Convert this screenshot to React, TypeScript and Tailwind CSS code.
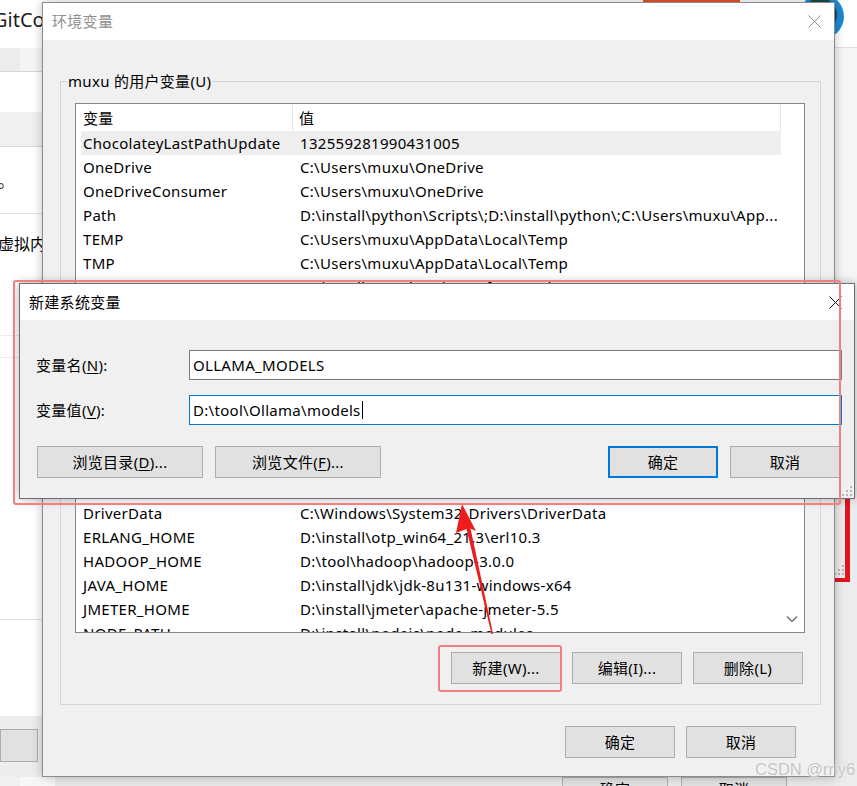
import React from "react";

type RowT = [string, string];

const userRows: RowT[] = [
  ["ChocolateyLastPathUpdate", "132559281990431005"],
  ["OneDrive", String.raw`C:\Users\muxu\OneDrive`],
  ["OneDriveConsumer", String.raw`C:\Users\muxu\OneDrive`],
  ["Path", String.raw`D:\install\python\Scripts\;D:\install\python\;C:\Users\muxu\App...`],
  ["TEMP", String.raw`C:\Users\muxu\AppData\Local\Temp`],
  ["TMP", String.raw`C:\Users\muxu\AppData\Local\Temp`],
  ["VSCODE_HOME", String.raw`D:\install\vscode\Microsoft VS Code`],
];

const sysRows: RowT[] = [
  ["ChocolateyInstall", String.raw`C:\ProgramData\chocolatey`],
  ["CLASSPATH", String.raw`.;%JAVA_HOME%\lib\dt.jar;%JAVA_HOME%\lib\tools.jar`],
  ["ComSpec", String.raw`C:\Windows\system32\cmd.exe`],
  ["DriverData", String.raw`C:\Windows\System32\Drivers\DriverData`],
  ["ERLANG_HOME", String.raw`D:\install\otp_win64_21.3\erl10.3`],
  ["HADOOP_HOME", String.raw`D:\tool\hadoop\hadoop-3.0.0`],
  ["JAVA_HOME", String.raw`D:\install\jdk\jdk-8u131-windows-x64`],
  ["JMETER_HOME", String.raw`D:\install\jmeter\apache-jmeter-5.5`],
  ["NODE_PATH", String.raw`D:\install\nodejs\node_modules`],
];

function Row({ r, sel }: { r: RowT; sel?: boolean }) {
  return (
    <div className={sel ? "flex h-[24px] shrink-0 items-center bg-[#eeeeee]" : "flex h-[24px] shrink-0 items-center"}>
      <div className="w-[219px] shrink-0 overflow-hidden whitespace-nowrap pl-[2px]">{r[0]}</div>
      <div className="min-w-0 flex-1 overflow-hidden whitespace-nowrap">{r[1]}</div>
    </div>
  );
}

function Chevron() {
  return (
    <svg width="12" height="8" viewBox="0 0 12 8" className="absolute bottom-[9px] right-[6px]">
      <polyline points="1,1.5 6,6.5 11,1.5" fill="none" stroke="#606060" strokeWidth="1.2" />
    </svg>
  );
}

function List({ rows, tall, selFirst }: { rows: RowT[]; tall?: boolean; selFirst?: boolean }) {
  return (
    <div className={tall ? "relative h-[232px] overflow-hidden border border-[#828790] bg-white" : "relative h-[193px] overflow-hidden border border-[#828790] bg-white"}>
      <div className="flex w-[705px] flex-col pl-[5px]">
        <div className="flex h-[27px] shrink-0 items-center border-r border-[#e5e5e5] pt-[1px]">
          <div className="flex h-full w-[212px] shrink-0 items-center border-r border-[#e5e5e5] pl-[2px]">变量</div>
          <div className="pl-[6px]">值</div>
        </div>
        {rows.map((r, i) => (
          <Row key={i} r={r} sel={selFirst && i === 0} />
        ))}
      </div>
      {tall ? <Chevron /> : null}
    </div>
  );
}

function Btn({ children, wide, primary }: { children: React.ReactNode; wide?: boolean; primary?: boolean }) {
  if (primary) {
    return (
      <div className="flex h-[32px] w-[110px] shrink-0 items-center justify-center border-2 border-[#0078d7] bg-[#e1e1e1]">
        {children}
      </div>
    );
  }
  return (
    <div className={wide ? "flex h-[32px] w-[166px] shrink-0 items-center justify-center border border-[#adadad] bg-[#e1e1e1]" : "flex h-[32px] w-[110px] shrink-0 items-center justify-center border border-[#adadad] bg-[#e1e1e1]"}>
      {children}
    </div>
  );
}

function XIcon({ color }: { color: string }) {
  return (
    <svg width="13" height="13" viewBox="0 0 13 13">
      <line x1="0.5" y1="0.5" x2="12.5" y2="12.5" stroke={color} strokeWidth="1" />
      <line x1="12.5" y1="0.5" x2="0.5" y2="12.5" stroke={color} strokeWidth="1" />
    </svg>
  );
}

function Grip() {
  return (
    <svg width="11" height="11" viewBox="0 0 11 11">
      <rect x="8" y="0" width="2" height="2" fill="#b5b5b5" />
      <rect x="4" y="4" width="2" height="2" fill="#b5b5b5" />
      <rect x="8" y="4" width="2" height="2" fill="#b5b5b5" />
      <rect x="0" y="8" width="2" height="2" fill="#b5b5b5" />
      <rect x="4" y="8" width="2" height="2" fill="#b5b5b5" />
      <rect x="8" y="8" width="2" height="2" fill="#b5b5b5" />
    </svg>
  );
}

function Group({ label, children }: { label: string; children: React.ReactNode }) {
  return (
    <fieldset className="m-0 min-w-0 border border-[#d5d5d5] p-0">
      <legend className="ml-[6px] px-[1px] leading-[20px]">{label}</legend>
      {children}
    </fieldset>
  );
}

export default function App() {
  return (
    <div className="relative h-[786px] w-[857px] overflow-hidden bg-white font-['Noto_Sans','Noto_Sans_CJK_SC',sans-serif] text-[15px] tracking-[0.3px] text-black">
      {/* background application */}
      <div className="flex h-full w-full flex-col">
        <div className="h-[48px] shrink-0 overflow-hidden whitespace-nowrap bg-white pt-[5px] text-[20px] leading-[30px] tracking-normal text-[#222]">
          <span className="-ml-[7px]">GitCode</span>
        </div>
        <div className="flex h-[24px] shrink-0 border-b border-[#d6d6d6] bg-[#f5f5f5]">
          <div className="h-full w-[20px] bg-[#ececec]" />
        </div>
        <div className="h-[40px] shrink-0 bg-white" />
        <div className="h-[35px] shrink-0 border-b border-[#d9d9d9] bg-[#f0f0f0]" />
        <div className="flex h-[67px] shrink-0 items-center border-b border-[#e0e0e0] bg-white pt-[2px] text-[16px]">
          <span className="-ml-[2px]">。</span>
        </div>
        <div className="flex h-[406px] shrink-0 flex-col border-b border-[#e0e0e0] bg-white text-[16px] tracking-normal">
          <div className="flex h-[58px] items-center pt-[1px]">
            <span className="-ml-[2px] whitespace-nowrap">虚拟内存</span>
          </div>
          <div className="h-[64px] border-b border-[#ececec]" />
          <div className="h-[22px] border-b border-[#ececec]" />
        </div>
        <div className="h-[96px] shrink-0 bg-white" />
        <div className="flex h-[61px] shrink-0 flex-col bg-[#ededed] pt-[13px]">
          <div className="h-[33px] w-[38px] border border-[#adadad] bg-[#e1e1e1]" />
        </div>
        <div className="flex flex-1 bg-[#e9e9e9]">
          <div className="w-[20px] bg-[#f0f0f0]" />
          <div className="w-[35px] bg-[#f7f7f7]" />
        </div>
      </div>

      {/* right edge of background */}
      <div className="absolute left-[835px] top-0 flex h-full w-[22px] flex-col">
        <div className="h-[48px] border-b border-[#dddddd] bg-white" />
        <div className="h-[392px] bg-[#f6f6f6]" />
        <div className="flex-1 bg-[#ececec]" />
      </div>
      <div className="absolute left-[643px] top-0 h-[3px] w-[97px] bg-[#e8512a]" />
      <div className="absolute left-[799px] top-[-6px] h-[45px] w-[45px] rounded-full bg-[#1d8ad6]">
        <div className="ml-[4px] mt-[4px] h-[34px] w-[34px] rounded-full bg-[#1c4a4a]" />
      </div>
      <div className="absolute left-[845px] top-[497px] h-[85px] w-[5px] bg-[#e3141f]" />
      <div className="absolute left-[835px] top-[578px] h-[4px] w-[15px] bg-[#e3141f]" />
      <div className="absolute left-[834px] top-[565px]">
        <Grip />
      </div>

      {/* partially visible buttons of window behind */}
      <div className="absolute left-[562px] top-[777px] flex h-[24px] w-[106px] items-center justify-center border border-[#adadad] bg-[#e1e1e1]">确定</div>
      <div className="absolute left-[681px] top-[777px] flex h-[24px] w-[106px] items-center justify-center border border-[#adadad] bg-[#e1e1e1]">取消</div>

      {/* 环境变量 window */}
      <div className="absolute left-[42px] top-[2px] flex h-[775px] w-[793px] flex-col border border-[#8c8c8c] bg-[#f0f0f0] shadow-[0_0_10px_rgba(0,0,0,0.25)]">
        <div className="flex h-[37px] shrink-0 items-center justify-between bg-white pl-[9px] pr-[13px]">
          <span className="text-[#8f8f8f]">环境变量</span>
          <XIcon color="#8a8a8a" />
        </div>
        <div className="flex flex-1 flex-col pl-[17px] pr-[13px] pt-[31px]">
          <Group label="muxu 的用户变量(U)">
            <div className="flex flex-col pb-[13px] pl-[14px] pr-[15px] pt-[12px]">
              <List rows={userRows} selFirst />
              <div className="mt-[20px] flex justify-end gap-[11px] pr-[2px]">
                <Btn>新建(N)...</Btn>
                <Btn>编辑(E)...</Btn>
                <Btn>删除(D)</Btn>
              </div>
            </div>
          </Group>
          <div className="mt-[6px]">
            <Group label="系统变量(S)">
              <div className="flex flex-col pb-[20px] pl-[14px] pr-[15px] pt-[13px]">
                <List rows={sysRows} tall />
                <div className="mt-[19px] flex justify-end gap-[11px] pr-[2px]">
                  <Btn>新建(W)...</Btn>
                  <Btn>编辑(I)...</Btn>
                  <Btn>删除(L)</Btn>
                </div>
              </div>
            </Group>
          </div>
          <div className="mt-[21px] flex justify-end gap-[11px] pr-[25px]">
            <Btn>确定</Btn>
            <Btn>取消</Btn>
          </div>
        </div>
      </div>

      {/* highlight around 新建 button */}
      <div className="absolute left-[438px] top-[645px] h-[47px] w-[124px] rounded-[3px] border-2 border-[#f08080]" />

      {/* 新建系统变量 dialog */}
      <div className="absolute left-[19px] top-[283px] flex h-[216px] w-[836px] flex-col border border-[#6f6f6f] bg-[#f0f0f0] shadow-[0_0_10px_rgba(0,0,0,0.3)]">
        <div className="flex h-[36px] shrink-0 items-center justify-between bg-white pl-[9px] pr-[12px]">
          <span>新建系统变量</span>
          <XIcon color="#111111" />
        </div>
        <div className="relative flex flex-1 flex-col pl-[16px] pr-[12px] pt-[30px]">
          <div className="flex h-[30px] items-center">
            <div className="w-[153px] shrink-0">
              变量名(<span className="underline underline-offset-2">N</span>):
            </div>
            <div className="flex h-[30px] flex-1 items-center border border-[#7a7a7a] bg-white pl-[3px]">OLLAMA_MODELS</div>
          </div>
          <div className="mt-[15px] flex h-[30px] items-center">
            <div className="w-[153px] shrink-0">
              变量值(<span className="underline underline-offset-2">V</span>):
            </div>
            <div className="flex h-[30px] flex-1 items-center border border-[#0078d7] bg-white pl-[3px]">
              <span>D:\tool\Ollama\models</span>
              <span className="ml-[1px] h-[18px] w-[1px] bg-black" />
            </div>
          </div>
          <div className="ml-[1px] mr-[2px] mt-[21px] flex items-center">
            <Btn wide>
              <span>
                浏览目录(<span className="underline underline-offset-2">D</span>)...
              </span>
            </Btn>
            <div className="ml-[12px]">
              <Btn wide>
                <span>
                  浏览文件(<span className="underline underline-offset-2">F</span>)...
                </span>
              </Btn>
            </div>
            <div className="flex-1" />
            <Btn primary>确定</Btn>
            <div className="ml-[12px]">
              <Btn>取消</Btn>
            </div>
          </div>
          <div className="absolute bottom-[1px] right-[1px]">
            <Grip />
          </div>
        </div>
      </div>

      {/* highlight around dialog */}
      <div className="absolute left-[13px] top-[280px] h-[225px] w-[828px] rounded-[3px] border-2 border-[#f08080]" />

      {/* red arrow */}
      <svg className="pointer-events-none absolute left-0 top-0" width="857" height="786" viewBox="0 0 857 786">
        <polygon points="493,634 491.5,634 466,527 470,526" fill="#ee1c1c" />
        <polygon points="462,504 476,531 469,528 456,533" fill="#ee1c1c" />
      </svg>

      {/* watermark */}
      <div className="absolute left-[755px] top-[757px] whitespace-nowrap font-['Liberation_Sans',sans-serif] text-[16.5px] tracking-normal text-[#c4c4c4] [text-shadow:0_0_2px_#ffffff]">
        CSDN @rriy6
      </div>
    </div>
  );
}
